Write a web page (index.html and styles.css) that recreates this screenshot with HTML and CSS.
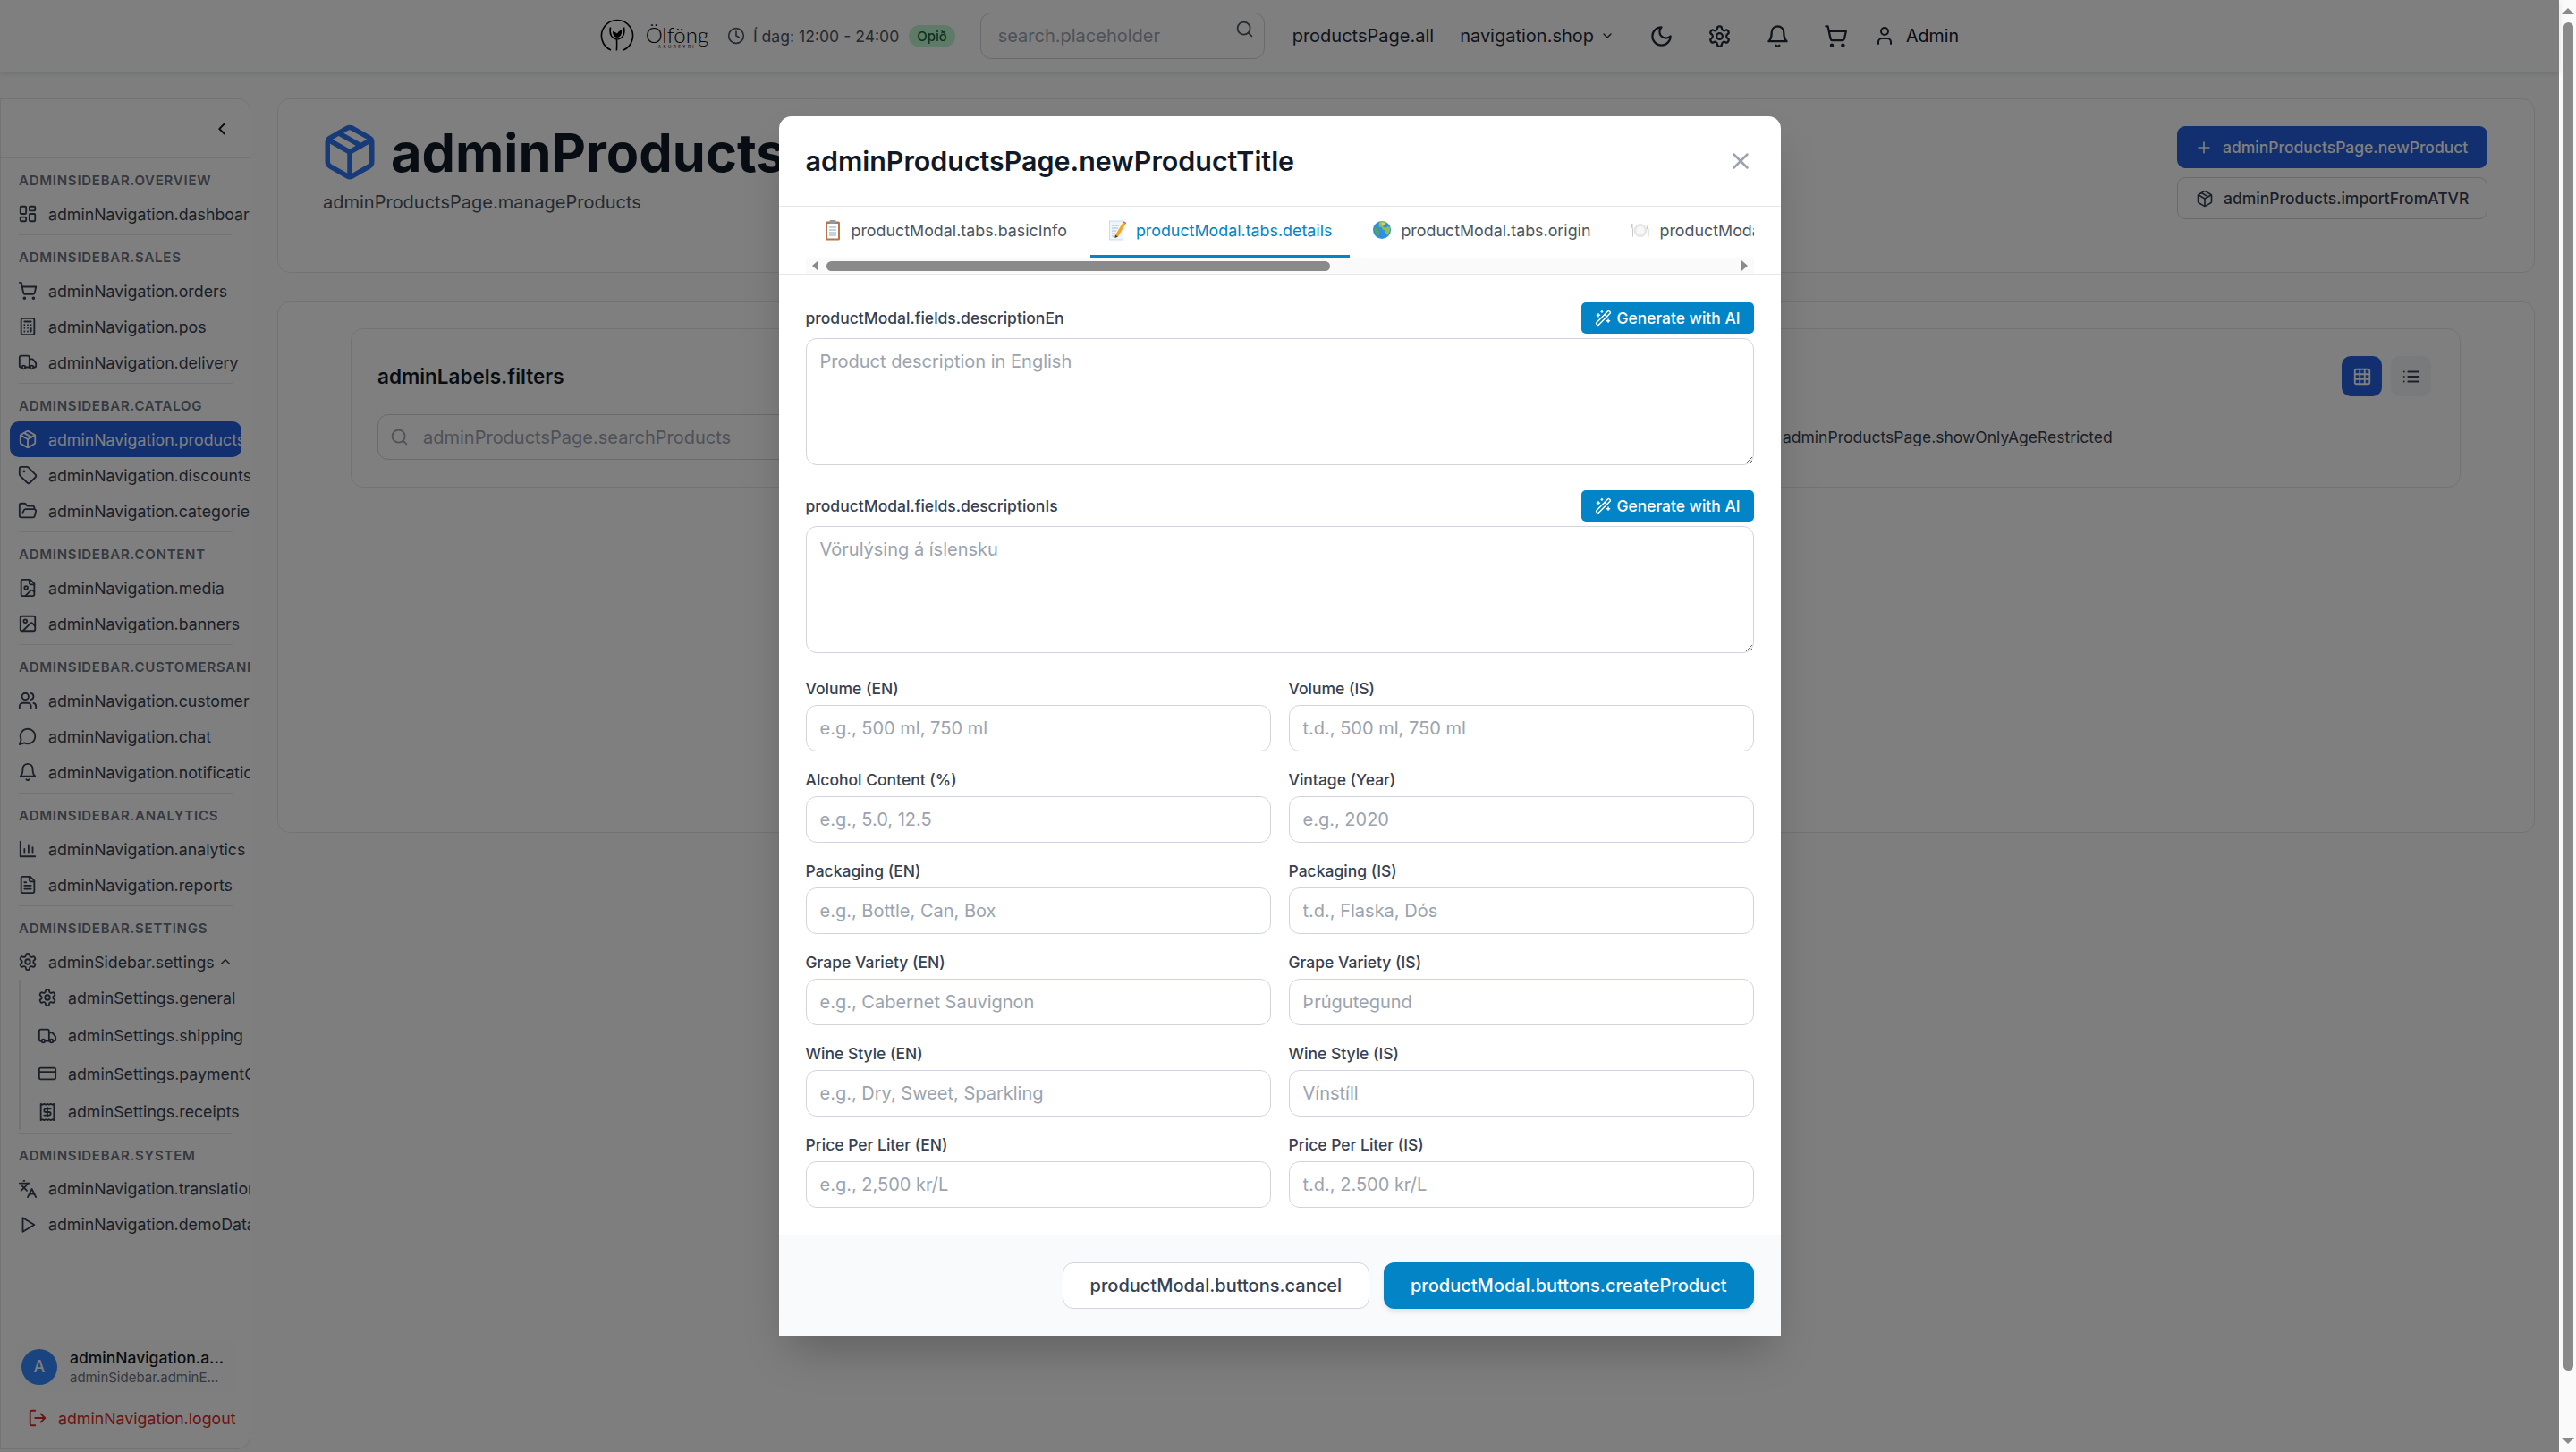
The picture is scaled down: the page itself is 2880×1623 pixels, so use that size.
FILE: index.html
```html
<!DOCTYPE html>
<html lang="en">
<head>
  <meta charset="UTF-8">
  <title>adminProductsPage</title>
  <link rel="stylesheet" href="styles.css">
</head>
<body>

<!-- icon sprite -->
<svg class="sprite" xmlns="http://www.w3.org/2000/svg">
  <symbol id="i-dashboard" viewBox="0 0 24 24"><rect x="3" y="3" width="7" height="9" rx="1"/><rect x="14" y="3" width="7" height="5" rx="1"/><rect x="14" y="12" width="7" height="9" rx="1"/><rect x="3" y="16" width="7" height="5" rx="1"/></symbol>
  <symbol id="i-cart" viewBox="0 0 24 24"><circle cx="8" cy="21" r="1"/><circle cx="19" cy="21" r="1"/><path d="M2.05 2.05h2l2.66 12.42a2 2 0 0 0 2 1.58h9.78a2 2 0 0 0 1.95-1.57l1.65-7.43H5.12"/></symbol>
  <symbol id="i-calc" viewBox="0 0 24 24"><rect x="4" y="2" width="16" height="20" rx="2"/><path d="M8 6h8M16 14v4M16 10h.01M12 10h.01M8 10h.01M12 14h.01M8 14h.01M12 18h.01M8 18h.01"/></symbol>
  <symbol id="i-truck" viewBox="0 0 24 24"><path d="M14 18V6a2 2 0 0 0-2-2H4a2 2 0 0 0-2 2v11a1 1 0 0 0 1 1h2"/><path d="M15 18H9"/><path d="M19 18h2a1 1 0 0 0 1-1v-3.65a1 1 0 0 0-.22-.624l-3.48-4.35A1 1 0 0 0 17.52 8H14"/><circle cx="17" cy="18" r="2"/><circle cx="7" cy="18" r="2"/></symbol>
  <symbol id="i-package" viewBox="0 0 24 24"><path d="M11 21.73a2 2 0 0 0 2 0l7-4A2 2 0 0 0 21 16V8a2 2 0 0 0-1-1.73l-7-4a2 2 0 0 0-2 0l-7 4A2 2 0 0 0 3 8v8a2 2 0 0 0 1 1.73z"/><path d="M12 22V12"/><path d="M3.29 7 12 12l8.71-5"/><path d="m7.5 4.27 9 5.15"/></symbol>
  <symbol id="i-tag" viewBox="0 0 24 24"><path d="M12.586 2.586A2 2 0 0 0 11.172 2H4a2 2 0 0 0-2 2v7.172a2 2 0 0 0 .586 1.414l8.704 8.704a2.426 2.426 0 0 0 3.42 0l6.58-6.58a2.426 2.426 0 0 0 0-3.42z"/><circle cx="7.5" cy="7.5" r=".5"/></symbol>
  <symbol id="i-folder" viewBox="0 0 24 24"><path d="m6 14 1.5-2.9A2 2 0 0 1 9.24 10H20a2 2 0 0 1 1.94 2.5l-1.54 6a2 2 0 0 1-1.95 1.5H4a2 2 0 0 1-2-2V5a2 2 0 0 1 2-2h3.9a2 2 0 0 1 1.69.9l.81 1.2a2 2 0 0 0 1.67.9H18a2 2 0 0 1 2 2v2"/></symbol>
  <symbol id="i-fileimg" viewBox="0 0 24 24"><path d="M15 2H6a2 2 0 0 0-2 2v16a2 2 0 0 0 2 2h12a2 2 0 0 0 2-2V7Z"/><path d="M14 2v4a2 2 0 0 0 2 2h4"/><circle cx="10" cy="12" r="2"/><path d="m20 17-1.296-1.296a2.41 2.41 0 0 0-3.408 0L9 22"/></symbol>
  <symbol id="i-image" viewBox="0 0 24 24"><rect x="3" y="3" width="18" height="18" rx="2"/><circle cx="9" cy="9" r="2"/><path d="m21 15-3.086-3.086a2 2 0 0 0-2.828 0L6 21"/></symbol>
  <symbol id="i-users" viewBox="0 0 24 24"><path d="M16 21v-2a4 4 0 0 0-4-4H6a4 4 0 0 0-4 4v2"/><circle cx="9" cy="7" r="4"/><path d="M22 21v-2a4 4 0 0 0-3-3.87"/><path d="M16 3.13a4 4 0 0 1 0 7.75"/></symbol>
  <symbol id="i-chat" viewBox="0 0 24 24"><path d="M7.9 20A9 9 0 1 0 4 16.1L2 22Z"/></symbol>
  <symbol id="i-bell" viewBox="0 0 24 24"><path d="M6 8a6 6 0 0 1 12 0c0 7 3 9 3 9H3s3-2 3-9"/><path d="M10.3 21a1.94 1.94 0 0 0 3.4 0"/></symbol>
  <symbol id="i-chart" viewBox="0 0 24 24"><path d="M3 3v18h18"/><path d="M8 17v-5"/><path d="M13 17V7"/><path d="M18 17v-7"/></symbol>
  <symbol id="i-filetext" viewBox="0 0 24 24"><path d="M15 2H6a2 2 0 0 0-2 2v16a2 2 0 0 0 2 2h12a2 2 0 0 0 2-2V7Z"/><path d="M14 2v4a2 2 0 0 0 2 2h4"/><path d="M10 9H8M16 13H8M16 17H8"/></symbol>
  <symbol id="i-gear" viewBox="0 0 24 24"><path d="M12.22 2h-.44a2 2 0 0 0-2 2v.18a2 2 0 0 1-1 1.73l-.43.25a2 2 0 0 1-2 0l-.15-.08a2 2 0 0 0-2.73.73l-.22.38a2 2 0 0 0 .73 2.73l.15.1a2 2 0 0 1 1 1.72v.51a2 2 0 0 1-1 1.74l-.15.09a2 2 0 0 0-.73 2.73l.22.38a2 2 0 0 0 2.73.73l.15-.08a2 2 0 0 1 2 0l.43.25a2 2 0 0 1 1 1.73V20a2 2 0 0 0 2 2h.44a2 2 0 0 0 2-2v-.18a2 2 0 0 1 1-1.73l.43-.25a2 2 0 0 1 2 0l.15.08a2 2 0 0 0 2.73-.73l.22-.39a2 2 0 0 0-.73-2.73l-.15-.08a2 2 0 0 1-1-1.74v-.5a2 2 0 0 1 1-1.74l.15-.09a2 2 0 0 0 .73-2.73l-.22-.38a2 2 0 0 0-2.73-.73l-.15.08a2 2 0 0 1-2 0l-.43-.25a2 2 0 0 1-1-1.73V4a2 2 0 0 0-2-2z"/><circle cx="12" cy="12" r="3"/></symbol>
  <symbol id="i-card" viewBox="0 0 24 24"><rect x="2" y="5" width="20" height="14" rx="2"/><path d="M2 10h20"/></symbol>
  <symbol id="i-receipt" viewBox="0 0 24 24"><path d="M4 2v20l2-1 2 1 2-1 2 1 2-1 2 1 2-1 2 1V2l-2 1-2-1-2 1-2-1-2 1-2-1-2 1Z"/><path d="M16 8h-6a2 2 0 1 0 0 4h4a2 2 0 1 1 0 4H8"/><path d="M12 17.5v-11"/></symbol>
  <symbol id="i-lang" viewBox="0 0 24 24"><path d="m5 8 6 6"/><path d="m4 14 6-6 2-3"/><path d="M2 5h12"/><path d="M7 2h1"/><path d="m22 22-5-10-5 10"/><path d="M14 18h6"/></symbol>
  <symbol id="i-play" viewBox="0 0 24 24"><path d="M6 3.5 20 12 6 20.5Z"/></symbol>
  <symbol id="i-logout" viewBox="0 0 24 24"><path d="M9 21H5a2 2 0 0 1-2-2V5a2 2 0 0 1 2-2h4"/><path d="m16 17 5-5-5-5"/><path d="M21 12H9"/></symbol>
  <symbol id="i-clock" viewBox="0 0 24 24"><circle cx="12" cy="12" r="10"/><path d="M12 6v6l4 2"/></symbol>
  <symbol id="i-search" viewBox="0 0 24 24"><circle cx="11" cy="11" r="8"/><path d="m21 21-4.3-4.3"/></symbol>
  <symbol id="i-moon" viewBox="0 0 24 24"><path d="M12 3a6 6 0 0 0 9 9 9 9 0 1 1-9-9Z"/></symbol>
  <symbol id="i-user" viewBox="0 0 24 24"><path d="M19 21v-2a4 4 0 0 0-4-4H9a4 4 0 0 0-4 4v2"/><circle cx="12" cy="7" r="4"/></symbol>
  <symbol id="i-plus" viewBox="0 0 24 24"><path d="M5 12h14M12 5v14"/></symbol>
  <symbol id="i-x" viewBox="0 0 24 24"><path d="M18 6 6 18M6 6l12 12"/></symbol>
  <symbol id="i-down" viewBox="0 0 24 24"><path d="m6 9 6 6 6-6"/></symbol>
  <symbol id="i-up" viewBox="0 0 24 24"><path d="m18 15-6-6-6 6"/></symbol>
  <symbol id="i-left" viewBox="0 0 24 24"><path d="m15 18-6-6 6-6"/></symbol>
  <symbol id="i-table" viewBox="0 0 24 24"><rect x="3" y="3" width="18" height="18" rx="2"/><path d="M3 9h18M3 15h18M9 3v18M15 3v18"/></symbol>
  <symbol id="i-list" viewBox="0 0 24 24"><path d="M8 6h13M8 12h13M8 18h13M3 6h.01M3 12h.01M3 18h.01"/></symbol>
  <symbol id="i-wand" viewBox="0 0 24 24"><path d="m21.64 3.64-1.28-1.28a1.21 1.21 0 0 0-1.72 0L2.36 18.64a1.21 1.21 0 0 0 0 1.72l1.28 1.28a1.2 1.2 0 0 0 1.72 0L21.64 5.36a1.2 1.2 0 0 0 0-1.72"/><path d="m14 7 3 3"/><path d="M5 6v4M19 14v4M10 2v2M7 8H3M21 16h-4M11 3H9"/></symbol>
</svg>

<div class="screen">
  <div class="page">

    <!-- top header -->
    <header class="topbar">
      <div class="logo">
        <svg class="logo-mark" viewBox="0 0 38 38">
          <path d="M12 35A17.5 17.5 0 1 1 26 35" fill="none" stroke="#000" stroke-width="1.6"/>
          <path d="M11.500 9.500c-1.500 7 1 12.500 7 13.500 .3 4 .2 8-.1 12.500M26.500 9.500c1.500 7-1 12.500-7 13.500" fill="none" stroke="#000" stroke-width="1.6"/>
          <path d="M14 14c2 .5 3.500 1.200 5 2.500 1-2 3-3.500 5-4.500 .5 5-1 8.500-5 9-3.500-.5-5-3.500-5-7Z" fill="#000"/>
        </svg>
        <span class="logo-rule"></span>
        <div class="logo-text">
          <span class="logo-name">Ölföng</span>
          <span class="logo-sub">AKUREYRI</span>
        </div>
      </div>
      <div class="hours">
        <svg class="ic ic-clock"><use href="#i-clock"/></svg>
        <span>Í dag: 12:00 - 24:00</span>
        <span class="badge-open">Opið</span>
      </div>
      <div class="top-search">
        <span>search.placeholder</span>
        <svg class="ic top-search-ic"><use href="#i-search"/></svg>
      </div>
      <a class="top-link">productsPage.all</a>
      <a class="top-link top-shop">navigation.shop <svg class="ic ic-chev"><use href="#i-down"/></svg></a>
      <div class="top-icons">
        <svg class="ic ic-top"><use href="#i-moon"/></svg>
        <svg class="ic ic-top"><use href="#i-gear"/></svg>
        <svg class="ic ic-top"><use href="#i-bell"/></svg>
        <svg class="ic ic-top"><use href="#i-cart"/></svg>
      </div>
      <div class="top-user">
        <svg class="ic ic-user"><use href="#i-user"/></svg>
        <span>Admin</span>
      </div>
    </header>

    <div class="layout">
      <!-- sidebar -->
      <aside class="sidebar">
        <div class="side-top"><svg class="ic ic-back"><use href="#i-left"/></svg></div>

        <div class="nav-section">
          <div class="nav-label">adminSidebar.overview</div>
          <a class="nav-item"><svg class="ic"><use href="#i-dashboard"/></svg><span>adminNavigation.dashboard</span></a>
        </div>
        <div class="nav-section">
          <div class="nav-label">adminSidebar.sales</div>
          <a class="nav-item"><svg class="ic"><use href="#i-cart"/></svg><span>adminNavigation.orders</span></a>
          <a class="nav-item"><svg class="ic"><use href="#i-calc"/></svg><span>adminNavigation.pos</span></a>
          <a class="nav-item"><svg class="ic"><use href="#i-truck"/></svg><span>adminNavigation.delivery</span></a>
        </div>
        <div class="nav-section">
          <div class="nav-label">adminSidebar.catalog</div>
          <a class="nav-item active"><svg class="ic"><use href="#i-package"/></svg><span>adminNavigation.products</span></a>
          <a class="nav-item"><svg class="ic"><use href="#i-tag"/></svg><span>adminNavigation.discounts</span></a>
          <a class="nav-item"><svg class="ic"><use href="#i-folder"/></svg><span>adminNavigation.categories</span></a>
        </div>
        <div class="nav-section">
          <div class="nav-label">adminSidebar.content</div>
          <a class="nav-item"><svg class="ic"><use href="#i-fileimg"/></svg><span>adminNavigation.media</span></a>
          <a class="nav-item"><svg class="ic"><use href="#i-image"/></svg><span>adminNavigation.banners</span></a>
        </div>
        <div class="nav-section">
          <div class="nav-label">adminSidebar.customersAndMarketing</div>
          <a class="nav-item"><svg class="ic"><use href="#i-users"/></svg><span>adminNavigation.customers</span></a>
          <a class="nav-item"><svg class="ic"><use href="#i-chat"/></svg><span>adminNavigation.chat</span></a>
          <a class="nav-item"><svg class="ic"><use href="#i-bell"/></svg><span>adminNavigation.notifications</span></a>
        </div>
        <div class="nav-section">
          <div class="nav-label">adminSidebar.analytics</div>
          <a class="nav-item"><svg class="ic"><use href="#i-chart"/></svg><span>adminNavigation.analytics</span></a>
          <a class="nav-item"><svg class="ic"><use href="#i-filetext"/></svg><span>adminNavigation.reports</span></a>
        </div>
        <div class="nav-section">
          <div class="nav-label">adminSidebar.settings</div>
          <a class="nav-item"><svg class="ic"><use href="#i-gear"/></svg><span>adminSidebar.settings</span><svg class="ic ic-up"><use href="#i-up"/></svg></a>
          <div class="nav-sub">
            <a class="nav-item"><svg class="ic"><use href="#i-gear"/></svg><span>adminSettings.general</span></a>
            <a class="nav-item"><svg class="ic"><use href="#i-truck"/></svg><span>adminSettings.shipping</span></a>
            <a class="nav-item"><svg class="ic"><use href="#i-card"/></svg><span>adminSettings.paymentGateways</span></a>
            <a class="nav-item"><svg class="ic"><use href="#i-receipt"/></svg><span>adminSettings.receipts</span></a>
          </div>
        </div>
        <div class="nav-section last">
          <div class="nav-label">adminSidebar.system</div>
          <a class="nav-item"><svg class="ic"><use href="#i-lang"/></svg><span>adminNavigation.translations</span></a>
          <a class="nav-item"><svg class="ic"><use href="#i-play"/></svg><span>adminNavigation.demoData</span></a>
        </div>

        <div class="side-user">
          <span class="avatar">A</span>
          <div class="side-user-text">
            <div class="side-user-name">adminNavigation.a...</div>
            <div class="side-user-mail">adminSidebar.adminE...</div>
          </div>
        </div>
        <a class="logout"><svg class="ic"><use href="#i-logout"/></svg><span>adminNavigation.logout</span></a>
      </aside>

      <!-- main content, mostly behind the modal -->
      <main class="main">
        <section class="card head-card">
          <div class="head-left">
            <div class="head-title">
              <svg class="ic ic-title"><use href="#i-package"/></svg>
              <h1>adminProductsPage.title</h1>
            </div>
            <p class="head-sub">adminProductsPage.manageProducts</p>
          </div>
          <div class="head-actions">
            <a class="btn btn-primary"><svg class="ic"><use href="#i-plus"/></svg>adminProductsPage.newProduct</a>
            <a class="btn btn-outline"><svg class="ic"><use href="#i-package"/></svg>adminProducts.importFromATVR</a>
          </div>
        </section>

        <section class="card list-card">
          <div class="filters">
            <div class="filters-head">
              <h2>adminLabels.filters</h2>
              <div class="view-toggle">
                <span class="view-btn on"><svg class="ic"><use href="#i-table"/></svg></span>
                <span class="view-btn"><svg class="ic"><use href="#i-list"/></svg></span>
              </div>
            </div>
            <div class="filters-row">
              <div class="filter-search">
                <svg class="ic"><use href="#i-search"/></svg>
                <span>adminProductsPage.searchProducts</span>
              </div>
              <span class="filter-check">adminProductsPage.showOnlyAgeRestricted</span>
            </div>
          </div>
        </section>
      </main>
    </div>
  </div>

  <!-- dim layer and modal -->
  <div class="overlay">
    <div class="modal">
      <div class="modal-head">
        <h3>adminProductsPage.newProductTitle</h3>
        <svg class="ic ic-close"><use href="#i-x"/></svg>
      </div>

      <div class="tabs-wrap">
        <div class="tabs">
          <a class="tab">
            <svg class="emoji" viewBox="0 0 20 24"><rect x="2" y="2.500" width="16" height="21" rx="1.500" fill="#b5764a"/><rect x="4" y="5" width="12" height="16.500" fill="#fff"/><path d="M6 9h8M6 12h8M6 15h8M6 18h8" stroke="#8aa6bd" stroke-width="1"/><rect x="6.500" y="1" width="7" height="4" rx="1" fill="#8f99a3"/></svg>
            <span>productModal.tabs.basicInfo</span>
          </a>
          <a class="tab active">
            <svg class="emoji" viewBox="0 0 20 24"><rect x="1.500" y="2" width="15" height="21" fill="#eef5fb" stroke="#b9cfe2" stroke-width=".7"/><path d="M4 7h8M4 10h7M4 13h5M4 16h4M4 19h7" stroke="#9db7cc" stroke-width=".9"/><path d="M8 17.500 16.500 3.500l3 1.800L11 19.500l-3.500 1.500Z" fill="#f6a623"/><path d="M16.500 3.500l.8-1.300 3 1.800-.8 1.300Z" fill="#e2526a"/><path d="m8 17.500-.5 3.500 3.500-1.500Z" fill="#4a3b30"/></svg>
            <span>productModal.tabs.details</span>
          </a>
          <a class="tab">
            <svg class="emoji" viewBox="0 0 20 24"><circle cx="10" cy="12" r="10" fill="#2f8fe6"/><path d="M7 3c3-1.500 6-1 8 .5l-1 2-2 .5-.5 3 3 .5 2-1.500 2.500 1c.5 3-.5 6-3 9-1.500-1-2-3-2-5l-3-1.500-2-3L7 9l-.5-3Z" fill="#8cc152"/><path d="M1.500 9c2 0 4 1.500 5 4l1 4-2 1.500C3 17 1.500 13 1.500 9Z" fill="#5da544"/><path d="M9 4c2-.500 4-.500 5 .500L12.500 6 10 6Z" fill="#d9c98a"/></svg>
            <span>productModal.tabs.origin</span>
          </a>
          <a class="tab">
            <svg class="emoji" viewBox="0 0 20 24"><circle cx="10" cy="12.500" r="7" fill="#e9e9e9" stroke="#d8d8d8" stroke-width=".6"/><circle cx="10" cy="12.500" r="4.500" fill="#f7f7f7"/><path d="M1 5v5M.5 5v4c0 1 .5 1.500 1 1.500v9M19 5c-1 1-1.500 3-1.500 6h1.500v8.500" fill="none" stroke="#c9c9c9" stroke-width="1"/></svg>
            <span>productModal.tabs.nutrition</span>
          </a>
        </div>
        <div class="tabs-scroll">
          <span class="arrow arrow-left"></span>
          <span class="thumb"></span>
          <span class="arrow arrow-right"></span>
        </div>
      </div>

      <div class="modal-body">
        <div class="desc-block">
          <div class="desc-head">
            <label>productModal.fields.descriptionEn</label>
            <button class="ai-btn"><svg class="ic"><use href="#i-wand"/></svg>Generate with AI</button>
          </div>
          <textarea placeholder="Product description in English"></textarea>
        </div>
        <div class="desc-block">
          <div class="desc-head">
            <label>productModal.fields.descriptionIs</label>
            <button class="ai-btn"><svg class="ic"><use href="#i-wand"/></svg>Generate with AI</button>
          </div>
          <textarea placeholder="Vörulýsing á íslensku"></textarea>
        </div>

        <div class="field-grid">
          <div class="field"><label>Volume (EN)</label><input placeholder="e.g., 500 ml, 750 ml"></div>
          <div class="field"><label>Volume (IS)</label><input placeholder="t.d., 500 ml, 750 ml"></div>
          <div class="field"><label>Alcohol Content (%)</label><input placeholder="e.g., 5.0, 12.5"></div>
          <div class="field"><label>Vintage (Year)</label><input placeholder="e.g., 2020"></div>
          <div class="field"><label>Packaging (EN)</label><input placeholder="e.g., Bottle, Can, Box"></div>
          <div class="field"><label>Packaging (IS)</label><input placeholder="t.d., Flaska, Dós"></div>
          <div class="field"><label>Grape Variety (EN)</label><input placeholder="e.g., Cabernet Sauvignon"></div>
          <div class="field"><label>Grape Variety (IS)</label><input placeholder="Þrúgutegund"></div>
          <div class="field"><label>Wine Style (EN)</label><input placeholder="e.g., Dry, Sweet, Sparkling"></div>
          <div class="field"><label>Wine Style (IS)</label><input placeholder="Vínstíll"></div>
          <div class="field"><label>Price Per Liter (EN)</label><input placeholder="e.g., 2,500 kr/L"></div>
          <div class="field"><label>Price Per Liter (IS)</label><input placeholder="t.d., 2.500 kr/L"></div>
        </div>
      </div>

      <div class="modal-foot">
        <button class="foot-btn foot-cancel">productModal.buttons.cancel</button>
        <button class="foot-btn foot-create">productModal.buttons.createProduct</button>
      </div>
    </div>
  </div>

  <!-- window scrollbar -->
  <div class="win-scroll">
    <span class="win-arrow win-up"></span>
    <span class="win-thumb"></span>
    <span class="win-arrow win-down"></span>
  </div>
</div>

</body>
</html>
```

FILE: styles.css
```css
* { box-sizing: border-box; }
html, body { margin: 0; height: 100%; overflow: hidden; }
body { font-family: Inter, "Liberation Sans", sans-serif; color: #111827; background: #fafcfb; }
a { color: inherit; text-decoration: none; }
h1, h2, h3, p { margin: 0; }

.sprite { display: none; }
.ic {
  width: 22px;
  height: 22px;
  flex: none;
  fill: none;
  stroke: currentColor;
  stroke-width: 2;
  stroke-linecap: round;
  stroke-linejoin: round;
}

.screen { display: flex; height: 1623px; position: relative; }
.page { width: 2861px; flex: none; background: #fafcfb; }

/* top header */
.topbar {
  height: 80px;
  background: #fff;
  box-shadow: 0 2px 6px rgba(0,0,0,0.12);
  display: flex;
  align-items: center;
  justify-content: center;
  color: #374151;
  position: relative;
}
.logo { display: flex; align-items: center; margin-right: 22px; color: #000; }
.logo-mark { width: 38px; height: 38px; }
.logo-rule { width: 1px; height: 51px; background: #000; margin: 0 7px 0 6px; }
.logo-text { display: flex; flex-direction: column; align-items: center; width: 68px; }
.logo-name { font-family: Lato, sans-serif; font-weight: 300; font-size: 24px; line-height: 28px; }
.logo-sub { font-size: 4.500px; letter-spacing: 2.500px; line-height: 5px; margin-top: -3px; }
.hours { display: flex; align-items: center; font-size: 17.600px; color: #4b5563; }
.ic-clock { width: 20px; height: 20px; margin-right: 9px; }
.badge-open {
  background: #bbf7d0;
  color: #166534;
  font-size: 15px;
  font-weight: 500;
  border-radius: 13px;
  padding: 0 9px;
  height: 25px;
  line-height: 25px;
  margin-left: 11px;
}
.top-search {
  width: 318px;
  height: 52px;
  margin: 0 31px 0 28px;
  border: 1.500px solid #d1d5db;
  border-radius: 12px;
  padding: 0 18px 0 19px;
  display: flex;
  justify-content: space-between;
  align-items: center;
  font-size: 20px;
  color: #9ca3af;
}
.top-search-ic { width: 21px; height: 21px; margin: -16px -7px 0 0; color: #4b5563; }
.top-link { font-size: 20px; color: #1f2937; }
.top-shop { margin-left: 29px; display: flex; align-items: center; gap: 7px; }
.ic-chev { width: 16px; height: 16px; }
.top-icons { display: flex; gap: 38px; margin-left: 39px; color: #1f2937; }
.ic-top { width: 27px; height: 27px; }
.top-user { display: flex; align-items: center; gap: 12px; margin-left: 29px; font-size: 19.600px; color: #111827; }
.ic-user { width: 24px; height: 24px; color: #1f2937; }

.layout { display: flex; padding-top: 30px; align-items: flex-start; }

/* sidebar */
.sidebar {
  width: 280px;
  height: 1510px;
  flex: none;
  background: #fff;
  border: 1px solid #e5e7eb;
  border-radius: 0 14px 14px 0;
  overflow: hidden;
  display: flex;
  flex-direction: column;
}
.side-top {
  height: 66px;
  flex: none;
  border-bottom: 1px solid #e5e7eb;
  display: flex;
  align-items: center;
  justify-content: flex-end;
  padding-right: 20px;
  color: #111827;
}
.ic-back { width: 22px; height: 22px; }
.nav-section {
  margin: 0 19px 0 20px;
  padding: 15px 0 3px;
  border-bottom: 1px solid #e5e7eb;
  flex: none;
}
.nav-section.last { border-bottom: 0; }
.nav-label {
  font-size: 15px;
  font-weight: 600;
  line-height: 20px;
  letter-spacing: 0.75px;
  text-transform: uppercase;
  color: #6b7280;
  white-space: nowrap;
  margin-bottom: 7px;
}
.nav-item {
  height: 40px;
  margin: 0 -20px 0 -10px;
  padding-left: 9px;
  display: flex;
  align-items: center;
  gap: 12px;
  font-size: 17.750px;
  color: #374151;
  white-space: nowrap;
  border-radius: 10px;
}
.nav-item.active {
  margin-right: -10px;
  background: #2460de;
  color: #fff;
  overflow: hidden;
}
.ic-up { width: 18px; height: 18px; margin-left: -9px; }
.nav-sub {
  border-left: 2px solid #e5e7eb;
  display: flex;
  flex-direction: column;
  gap: 2.500px;
  padding-left: 19px;
  margin-left: 0;
}
.nav-sub .nav-item { margin-left: 0; padding-left: 0; }
.side-user {
  margin: auto 15px 0 16px;
  height: 59px;
  flex: none;
  background: #fcfcfc;
  border-radius: 12px;
  display: flex;
  align-items: center;
  gap: 14px;
  padding-left: 7px;
}
.avatar {
  width: 40px;
  height: 40px;
  border-radius: 50%;
  background: #3488ff;
  color: #fff;
  font-size: 18px;
  font-weight: 500;
  display: flex;
  align-items: center;
  justify-content: center;
  flex: none;
}
.side-user-text { white-space: nowrap; }
.side-user-name { font-size: 17.500px; font-weight: 500; line-height: 24px; }
.side-user-mail { font-size: 15px; line-height: 20px; color: #6b7280; }
.logout {
  height: 40px;
  margin: 8px 0 14px;
  padding-left: 30px;
  display: flex;
  align-items: center;
  gap: 12px;
  font-size: 17.750px;
  color: #dc2626;
  flex: none;
  white-space: nowrap;
}

/* main */
.main { flex: 1; padding: 0 27px 0 30px; display: flex; flex-direction: column; gap: 32px; min-width: 0; }
.card { background: #fff; border: 1px solid #e5e7eb; border-radius: 14px; }
.head-card { height: 195px; padding: 26px 52px 26px 50px; display: flex; justify-content: space-between; }
.head-title { display: flex; align-items: center; gap: 13px; height: 66px; }
.ic-title { width: 66px; height: 66px; margin-left: -3px; color: #2f74f0; stroke-width: 2; }
.head-title h1 { font-size: 59.500px; font-weight: 700; white-space: nowrap; }
.head-sub { font-size: 20px; line-height: 30px; margin-top: 8px; color: #4b5563; }
.head-actions { display: flex; flex-direction: column; gap: 10px; margin-top: 4px; }
.btn {
  width: 347px;
  height: 47px;
  border-radius: 9px;
  display: flex;
  align-items: center;
  gap: 11px;
  padding-left: 20px;
  font-size: 17.500px;
  font-weight: 500;
  white-space: nowrap;
}
.btn .ic { width: 20px; height: 20px; }
.btn-primary { background: #2460de; color: #fff; }
.btn-outline { border: 1.500px solid #d1d5db; color: #374151; }
.list-card { height: 594px; padding: 29px 82px 0 81px; }
.filters { height: 178px; border: 1px solid #e5e7eb; border-radius: 14px; padding: 30px 32px 0 29px; }
.filters-head { display: flex; justify-content: space-between; align-items: center; height: 45px; }
.filters-head h2 { font-size: 22.500px; font-weight: 600; }
.view-toggle { display: flex; gap: 10px; }
.view-btn {
  width: 45px;
  height: 45px;
  border-radius: 10px;
  background: #f3f4f6;
  color: #374151;
  display: flex;
  align-items: center;
  justify-content: center;
}
.view-btn.on { background: #2460de; color: #fff; }
.filters-row { display: flex; gap: 71px; align-items: center; margin-top: 20px; }
.filter-search {
  width: 1500px;
  height: 51px;
  flex: none;
  border: 1.500px solid #d1d5db;
  border-radius: 12px;
  display: flex;
  align-items: center;
  gap: 16px;
  padding-left: 13px;
  font-size: 20px;
  color: #9ca3af;
}
.filter-search .ic { width: 21px; height: 21px; }
.filter-check { font-size: 17.500px; color: #374151; white-space: nowrap; }

/* overlay and modal */
.overlay {
  position: absolute;
  left: 0;
  top: 0;
  width: 2861px;
  height: 1623px;
  background: rgba(0,0,0,0.5);
  display: flex;
  align-items: center;
  justify-content: center;
}
.modal {
  width: 1120px;
  height: 1363px;
  background: #fff;
  border-radius: 14px 14px 0 0;
  box-shadow: 0 25px 50px -12px rgba(0,0,0,0.25);
  display: flex;
  flex-direction: column;
}
.modal-head {
  height: 101px;
  flex: none;
  padding: 0 30px;
  border-bottom: 1.500px solid #e5e7eb;
  display: flex;
  align-items: center;
  justify-content: space-between;
}
.modal-head h3 { font-size: 30.400px; font-weight: 600; color: #111827; }
.ic-close { width: 30px; height: 30px; color: #9ca3af; }
.tabs-wrap { margin: 0 30px; height: 76px; flex: none; position: relative; }
.tabs-wrap::after {
  content: "";
  position: absolute;
  left: -30px;
  right: -30px;
  bottom: 0;
  border-bottom: 1.500px solid #e5e7eb;
}
.tabs { height: 57px; display: flex; gap: 6px; overflow: hidden; }
.tab {
  flex: none;
  display: flex;
  align-items: center;
  gap: 11px;
  padding: 0 20px 2px;
  font-size: 17.850px;
  color: #4b5563;
  border-bottom: 3px solid transparent;
  white-space: nowrap;
}
.tab.active { color: #0284c7; border-bottom-color: #0284c7; }
.emoji { width: 20px; height: 24px; flex: none; }
.tabs-scroll { height: 18px; background: #fafafa; display: flex; align-items: center; padding: 0 7px; }
.thumb { width: 563px; height: 11px; border-radius: 6px; background: #8a8a8a; margin: 0 auto 0 9px; }
.arrow { width: 0; height: 0; border-top: 6px solid transparent; border-bottom: 6px solid transparent; }
.arrow-left { border-right: 7px solid #8a8a8a; }
.arrow-right { border-left: 7px solid #8a8a8a; }

.modal-body { flex: 1; padding: 31px 30px 0; min-height: 0; }
.desc-block { margin-bottom: 28px; }
.desc-head { display: flex; justify-content: space-between; align-items: center; height: 35px; margin-bottom: 5px; }
label { font-size: 17.500px; font-weight: 500; color: #374151; }
.ai-btn {
  width: 193px;
  height: 35px;
  border: 0;
  border-radius: 5px;
  background: #0284c7;
  color: #fff;
  font: 500 17.400px Inter, sans-serif;
  display: flex;
  align-items: center;
  justify-content: center;
  gap: 6px;
  padding: 0;
}
.ai-btn .ic { width: 19px; height: 19px; stroke-width: 1.800; }
textarea, input {
  display: block;
  width: 100%;
  border: 1.500px solid #d1d5db;
  border-radius: 12px;
  padding: 0 15px;
  font: 20px Inter, sans-serif;
  color: #111827;
  background: #fff;
  outline: 0;
}
textarea { height: 142px; padding-top: 13px; padding-bottom: 0; }
textarea::placeholder, input::placeholder { color: #9ca3af; opacity: 1; }
input { height: 52px; }
.field-grid { display: grid; grid-template-columns: 520px 520px; column-gap: 20px; row-gap: 20px; }
.field label { display: block; height: 30px; line-height: 24px; }
.modal-foot {
  height: 113px;
  flex: none;
  border-top: 1.500px solid #e5e7eb;
  background: #f9fafb;
  padding: 30px 30px 0;
  display: flex;
  justify-content: flex-end;
  gap: 16px;
}
.foot-btn {
  height: 52px;
  border-radius: 12px;
  font: 500 20px Inter, sans-serif;
  padding: 0 30px;
  white-space: nowrap;
}
.foot-cancel { border: 1.500px solid #d1d5db; background: #fff; color: #374151; }
.foot-create { border: 0; background: #0284c7; color: #fff; box-shadow: 0 4px 6px -1px rgba(0,0,0,0.1); }

/* window scrollbar */
.win-scroll {
  width: 19px;
  flex: none;
  background: #fafafa;
  border-left: 1px solid #fff;
  display: flex;
  flex-direction: column;
  align-items: center;
  padding: 9px 0;
}
.win-thumb { width: 11px; height: 1507px; margin: 9px 0 auto; border-radius: 6px; background: #8a8a8a; }
.win-arrow { width: 0; height: 0; border-left: 7px solid transparent; border-right: 7px solid transparent; }
.win-up { border-bottom: 7px solid #8a8a8a; }
.win-down { border-top: 7px solid #8a8a8a; }
```
